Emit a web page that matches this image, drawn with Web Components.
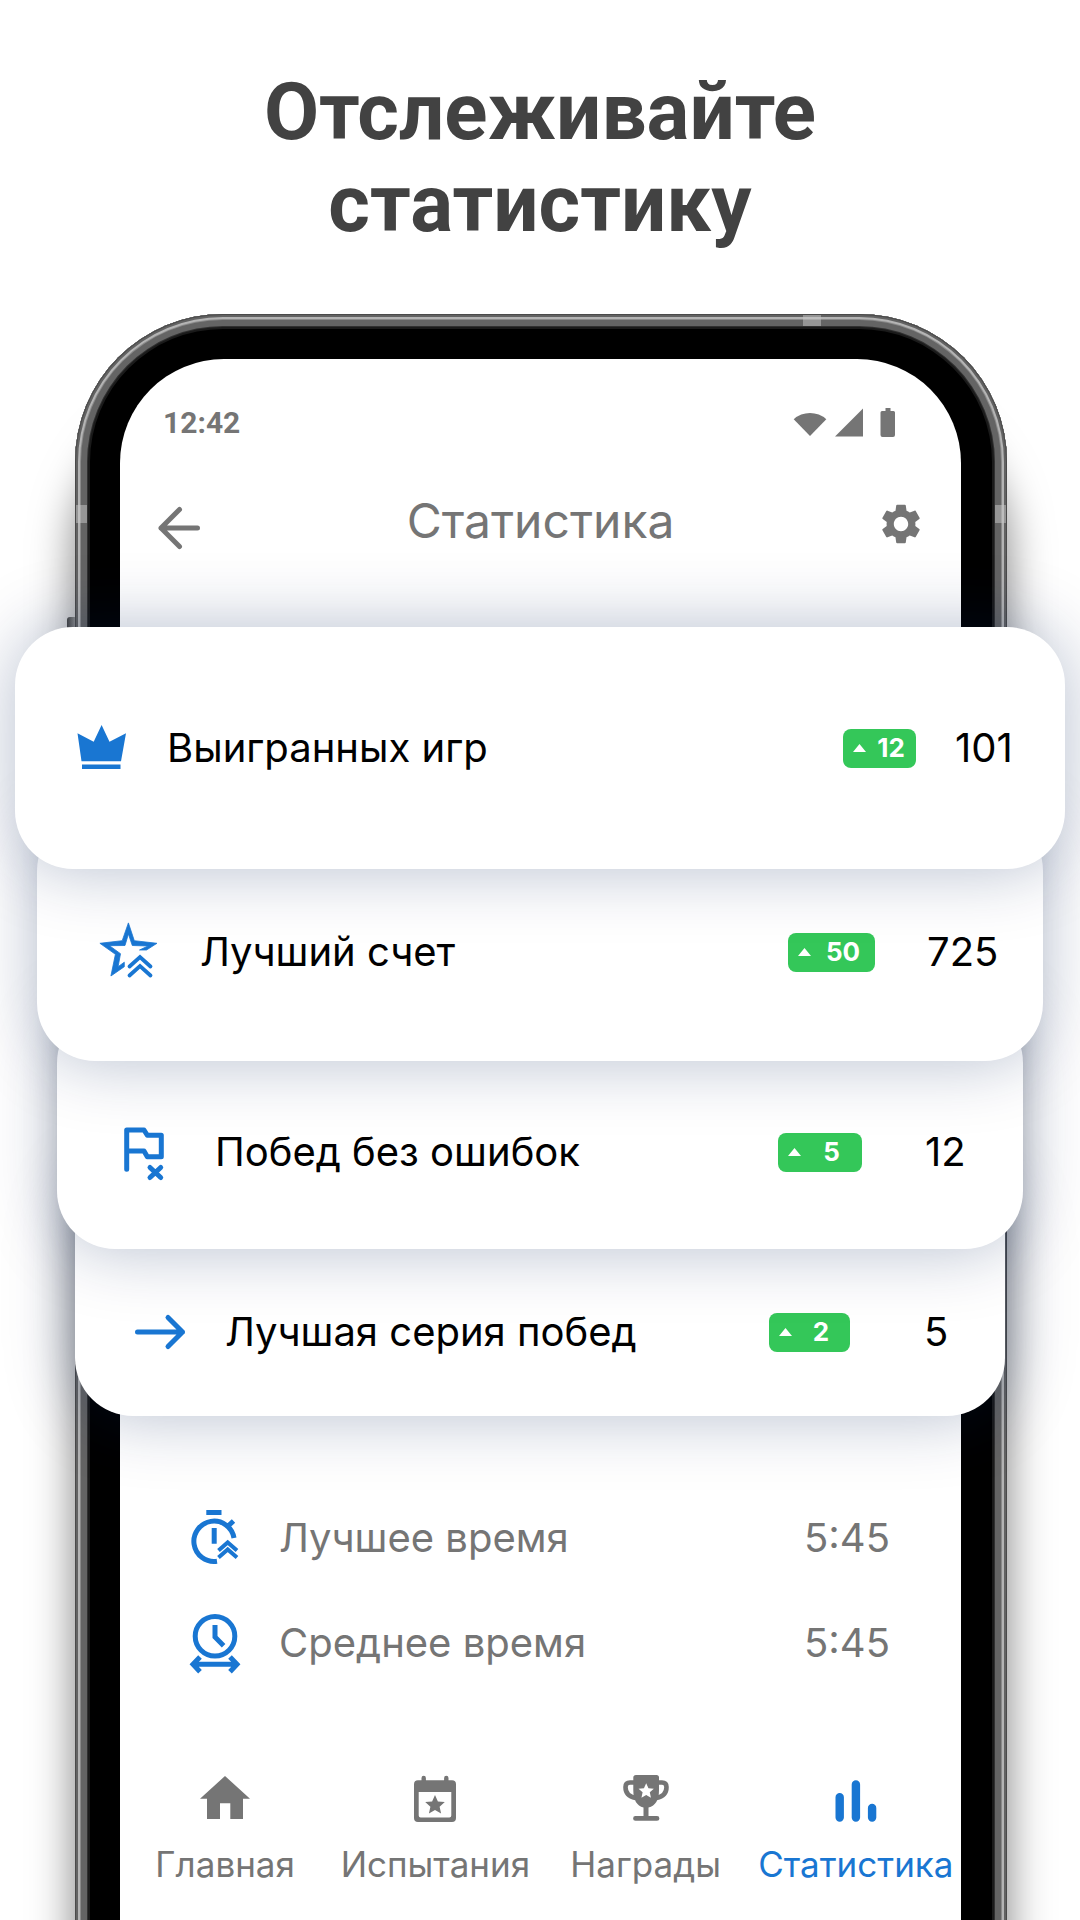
<!DOCTYPE html>
<html lang="ru">
<head>
<meta charset="utf-8">
<meta name="viewport" content="width=device-width, initial-scale=1">
<title>Статистика</title>
<style>
  body {
    margin: 0;
    background: #fff;
    font-family: Inter, "Liberation Sans", sans-serif;
  }
</style>
</head>
<body>
<promo-page>
  <span slot="title">Отслеживайте<br>статистику</span>
  <phone-frame>
    <status-bar time="12:42"></status-bar>
    <app-header>Статистика</app-header>
    <card-stack>
      <stat-card level="1" icon="crown" delta="12" value="101">Выигранных игр</stat-card>
      <stat-card level="2" icon="star" delta="50" value="725">Лучший счет</stat-card>
      <stat-card level="3" icon="flag" delta="5" value="12">Побед без ошибок</stat-card>
      <stat-card level="4" icon="streak" delta="2" value="5">Лучшая серия побед</stat-card>
    </card-stack>
    <time-list>
      <time-row icon="stopwatch" value="5:45">Лучшее время</time-row>
      <time-row icon="clock" value="5:45">Среднее время</time-row>
    </time-list>
    <tab-bar>
      <tab-item icon="home" href="#home">Главная</tab-item>
      <tab-item icon="calendar" href="#events">Испытания</tab-item>
      <tab-item icon="trophy" href="#awards">Награды</tab-item>
      <tab-item icon="bars" href="#stats" active>Статистика</tab-item>
    </tab-bar>
  </phone-frame>
</promo-page>

<script>
const STAR = 'M0-10L2.9-3.6 9.8-3 4.6 1.7 6.1 8.5 0 5-6.1 8.5-4.6 1.7-9.8-3-2.9-3.6z';

// name: [width, height, markup]
const ICONS = {
  wifi: [34, 30, '<path d="M.7 11.3A24 24 0 0 1 33.3 11.3L17 28z"/>'],
  signal: [28, 30, '<path d="M0 28.5L28 .5v28z"/>'],
  battery: [16, 30, '<path d="M5.500 0h5v3H13.500a1.500 1.500 0 0 1 1.500 1.500V27a2 2 0 0 1-2 2H2.500a2 2 0 0 1-2-2V4.500A1.500 1.500 0 0 1 2 3h3.500z"/>'],
  back: [42, 56, '<g fill="none" stroke="currentColor" stroke-width="5" stroke-linecap="round" stroke-linejoin="round"><path d="M21.500 16.500L3 35l18.500 18.500M3 35h36.500"/></g>'],
  gear: [40, 46, '<path transform="translate(-4 2) scale(2)" d="M19.140 12.940c.040-.3.060-.610.060-.940 0-.320-.020-.640-.070-.940l2.030-1.580c.180-.140.230-.410.120-.610l-1.920-3.320c-.120-.220-.370-.290-.590-.220l-2.390.960c-.5-.380-1.030-.7-1.620-.940l-.360-2.540c-.040-.240-.240-.410-.480-.410h-3.840c-.240 0-.430.170-.470.410l-.360 2.540c-.590.240-1.130.570-1.620.940l-2.390-.960c-.220-.080-.470 0-.590.220L2.740 8.870c-.120.210-.080.470.120.610l2.030 1.580c-.050.3-.090.630-.090.940s.020.640.070.940l-2.030 1.580c-.180.140-.230.410-.120.610l1.920 3.320c.120.220.370.290.590.220l2.390-.960c.5.380 1.030.7 1.620.940l.360 2.540c.050.240.240.410.480.410h3.840c.240 0 .440-.170.470-.410l.360-2.540c.590-.240 1.130-.560 1.620-.940l2.390.960c.220.080.470 0 .590-.220l1.920-3.320c.120-.220.070-.470-.120-.610l-2.010-1.580zM12 15.600c-1.980 0-3.600-1.620-3.600-3.600s1.620-3.600 3.600-3.600 3.600 1.620 3.600 3.600-1.620 3.600-3.600 3.600z"/>'],
  crown: [50, 46, '<path d="M.5 8.300l16.200 8.400L24.600 0l7.900 16.700L49 8.300l-5 28H4.500zM5 39.500h38.500V44H5z"/>'],
  star: [58, 60, '<path stroke="currentColor" stroke-width=".8" d="M40.500 28h7L58 21.300l-22.700-2.600L29.400.9l-6.200 17.800L.9 21.300l15.500 11L11.900 54l13.400-9.300v-4.500l-6.200 4.500 2.400-13-11-8L26 23.500l3.400-11.500L33.300 23.500l15.700.5z"/><path fill="none" stroke="currentColor" stroke-width="3.800" stroke-linecap="round" d="M30.500 44.500L41 35l10.500 9.500M30.500 53.500L41 44l10.500 9.500"/>'],
  flag: [40, 50, '<g fill="none" stroke="currentColor" stroke-width="5" stroke-linecap="round" stroke-linejoin="round"><path d="M2.700 42.300V3H20l3.300 5.300h14v21.400h-14L20 24H2.700M26 40.500l10.700 10M36.700 40.500L26 50.500"/></g>'],
  streak: [50, 34, '<path fill="none" stroke="currentColor" stroke-width="5" stroke-linecap="round" stroke-linejoin="round" d="M2.500 17H47.500M33 2.500L47.500 17 33 31.500"/>'],
  stopwatch: [50, 58, '<path d="M16.300 1h15.200v5H16.300zM21.700 19h5v15.700h-5z"/><g fill="none" stroke="currentColor"><path stroke-width="5" d="M27 52.300A20.200 20.200 0 1 1 44 29M38 17l5.500-5"/><path stroke-width="4" d="M28.500 41.500l9.200-8 9.300 8M28.500 48.500l9.200-8 9.300 8"/></g>'],
  clock: [50, 60, '<g fill="none" stroke="currentColor" stroke-width="5"><circle cx="25" cy="23.200" r="19.800"/><path d="M25 12v12l8.600 8.700M3.500 51.300h43M10 44l-7 7.300 7 7.400M40 44l7 7.300-7 7.400"/></g>'],
  home: [50, 48, '<path d="M25 1l25 22.700h-7V44H30.300V28.300H20V44H7V23.700H0z"/>'],
  calendar: [44, 48, `<path fill-rule="evenodd" d="M5 5.300h3.500V3a2.200 2.200 0 0 1 4.400 0v2.300h18.200V3a2.200 2.200 0 0 1 4.400 0v2.300H39a4 4 0 0 1 4 4V43a4 4 0 0 1-4 4H5a4 4 0 0 1-4-4V9.300a4 4 0 0 1 4-4zM5.700 17v23.500a2 2 0 0 0 2 2h28.600a2 2 0 0 0 2-2V17z"/><path transform="translate(22 30)" d="${STAR}"/>`],
  trophy: [48, 48, `<path d="M14 0h20.500Q37 0 37 2.500V15Q37 30 26.500 32.500V41H35a2.400 2.400 0 0 1 0 4.800H13.500a2.400 2.400 0 0 1 0-4.800h8V32.500Q11.300 30 11.300 15V2.500Q11.300 0 14 0z"/><path fill="none" stroke="currentColor" stroke-width="4.600" d="M12 7.500H8Q3.500 7.500 3.500 12q0 9 10 11M36 7.500h4q4.500 0 4.500 4.500 0 9-10 11"/><path fill="#fff" transform="translate(24.200 16) scale(.78)" d="${STAR}"/>`],
  bars: [42, 48, '<path fill="none" stroke="currentColor" stroke-width="8.400" stroke-linecap="round" d="M4.700 22.200v20.300M20.900 9.500v33M37.100 33v9.500"/>']
};

const icon = name => {
  const [width, height, body] = ICONS[name];
  return `<svg width="${width}" height="${height}" viewBox="0 0 ${width} ${height}" fill="currentColor" overflow="visible" aria-hidden="true">${body}</svg>`;
};

class BaseElement extends HTMLElement {

  constructor() {
    super();
    this.shadowDOM = this.attachShadow({mode: 'open'});
  }

  connectedCallback() {
    this.shadowDOM.innerHTML = this.template();
  }
}

class PromoPage extends BaseElement {

  template() {
    return `
      <style>
      :host {
        display: flex;
        flex-direction: column;
        min-height: 100vh;
        overflow: hidden;
      }

      h1 {
        margin: 0;
        padding: 66px 24px 64px;
        color: #424242;
        font: 700 80px/92px Roboto, sans-serif;
        text-align: center;
      }
      </style>
      <h1><slot name="title"></slot></h1>
      <slot></slot>
    `;
  }
}

class PhoneFrame extends BaseElement {

  template() {
    return `
      <style>
      /* the bottom edge of the frame runs off the page */
      :host {
        position: relative;
        display: flex;
        flex: 1;
        flex-direction: column;
        margin: 0 73px -20px 75px;
        padding: 45px 46px 20px 45px;
        border-radius: 148px 148px 0 0;
        background: #000;
        box-shadow:
          inset 0 0 0 1px #4a4a4a,
          inset 0 0 0 3px #626262,
          inset 0 0 0 5px #b4b4b4,
          inset 0 0 0 6px #8a8a8a,
          inset 0 0 0 12px #646464,
          inset 0 0 0 13px #303030,
          inset 0 0 0 15px #1a1a1a,
          0 90px 44px rgba(0, 0, 0, 0.5);
      }

      .screen {
        display: flex;
        flex: 1;
        flex-direction: column;
        border-radius: 104px 104px 0 0;
        background: #fff;
      }

      .band {
        position: absolute;
        background: rgba(200, 200, 200, 0.5);
      }

      .band.top {
        top: 1px;
        right: 186px;
        width: 18px;
        height: 11px;
      }

      .band.left, .band.right {
        top: 191px;
        width: 11px;
        height: 18px;
      }

      .band.left {
        left: 1px;
      }

      .band.right {
        right: 1px;
      }

      .key {
        position: absolute;
        top: 303px;
        left: -8px;
        width: 8px;
        height: 100px;
        border-radius: 3px 0 0 3px;
        background: linear-gradient(90deg, #444, #888);
      }
      </style>
      <i class="band top"></i>
      <i class="band left"></i>
      <i class="band right"></i>
      <i class="key"></i>
      <div class="screen"><slot></slot></div>
    `;
  }
}

class StatusBar extends BaseElement {

  template() {
    return `
      <style>
      :host {
        display: flex;
        align-items: center;
        justify-content: space-between;
        padding: 48px 65px 0 43px;
        color: #757575;
        font: 700 30px/32px Roboto, sans-serif;
      }

      .icons {
        display: flex;
        gap: 8px;
      }

      .icons svg:last-child {
        margin-left: 9px;
      }
      </style>
      <span>${this.getAttribute('time')}</span>
      <div class="icons">${icon('wifi')}${icon('signal')}${icon('battery')}</div>
    `;
  }
}

class AppHeader extends BaseElement {

  template() {
    return `
      <style>
      :host {
        display: flex;
        align-items: center;
        justify-content: space-between;
        margin-top: 52px;
        padding: 0 40px 0 38px;
        height: 60px;
        color: #757575;
      }

      h2 {
        margin: 0;
        font-weight: 400;
        font-size: 48px;
        line-height: 64px;
      }

      button {
        display: flex;
        padding: 0;
        border: 0;
        background: none;
        color: inherit;
      }
      </style>
      <button type="button" aria-label="Назад">${icon('back')}</button>
      <h2><slot></slot></h2>
      <button type="button" aria-label="Настройки">${icon('gear')}</button>
    `;
  }
}

class CardStack extends BaseElement {

  template() {
    return `
      <style>
      /* wider than the screen, the cards hang over both sides of the phone */
      :host {
        position: relative;
        z-index: 1;
        display: flex;
        flex-direction: column;
        margin: 76px -104px 0 -105px;
      }
      </style>
      <slot></slot>
    `;
  }
}

class StatCard extends BaseElement {

  template() {
    return `
      <style>
      :host {
        position: relative;
        display: flex;
        align-items: center;
        border-radius: 58px;
        background: #fff;
        box-shadow: 0 0 70px rgba(0, 32, 85, 0.29);
        color: #000;
        font-size: 40px;
        line-height: 60px;
      }

      :host([level="1"]) {
        z-index: 4;
        padding: 91px 0 91px 58px;
        --gap: 36px;
        --badge: 73px;
        --value-gap: 39px;
        --value: 110px;
      }

      :host([level="2"]) {
        z-index: 3;
        margin: -56px 22px 0;
        padding: 109px 0 79px 62px;
        --gap: 43px;
        --badge: 87px;
        --value-gap: 52px;
        --value: 116px;
      }

      :host([level="3"]) {
        z-index: 2;
        margin: -56px 42px 0;
        padding: 117px 0 67px 58px;
        --gap: 42px;
        --badge: 84px;
        --value-gap: 63px;
        --value: 98px;
      }

      :host([level="4"]) {
        z-index: 1;
        margin: -80px 60px 0;
        padding: 133px 0 54px 56px;
        --gap: 36px;
        --badge: 81px;
        --value-gap: 74px;
        --value: 81px;
      }

      .icon {
        display: flex;
        justify-content: center;
        width: 58px;
        margin-right: var(--gap);
        color: #1976d2;
      }

      .label {
        flex: 1;
        white-space: nowrap;
      }

      .badge {
        display: flex;
        align-items: center;
        box-sizing: border-box;
        width: var(--badge);
        height: 39px;
        padding-left: 10px;
        border-radius: 8px;
        background: #34c759;
        color: #fff;
        font-weight: 700;
        font-size: 26px;
      }

      .badge::before {
        content: "";
        width: 13px;
        height: 8px;
        background: currentColor;
        clip-path: polygon(50% 0, 100% 100%, 0 100%);
      }

      .badge span {
        flex: 1;
        text-align: center;
      }

      .value {
        width: var(--value);
        margin-left: var(--value-gap);
      }
      </style>
      <div class="icon">${icon(this.getAttribute('icon'))}</div>
      <div class="label"><slot></slot></div>
      <div class="badge"><span>${this.getAttribute('delta')}</span></div>
      <div class="value">${this.getAttribute('value')}</div>
    `;
  }
}

class TimeList extends BaseElement {

  template() {
    return `
      <style>
      :host {
        display: flex;
        flex-direction: column;
        gap: 45px;
        margin-top: 92px;
        padding: 0 71px 0 66px;
      }
      </style>
      <slot></slot>
    `;
  }
}

class TimeRow extends BaseElement {

  template() {
    return `
      <style>
      :host {
        display: flex;
        align-items: center;
        height: 60px;
        color: #757575;
        font-size: 40px;
        line-height: 60px;
      }

      .icon {
        display: flex;
        justify-content: center;
        width: 58px;
        margin-right: 35px;
        color: #1976d2;
      }

      .label {
        flex: 1;
      }
      </style>
      <div class="icon">${icon(this.getAttribute('icon'))}</div>
      <div class="label"><slot></slot></div>
      <div>${this.getAttribute('value')}</div>
    `;
  }
}

class TabBar extends BaseElement {

  template() {
    return `
      <style>
      :host {
        display: block;
        margin-top: auto;
        padding: 48px 0 35px;
      }

      nav {
        display: grid;
        grid-template-columns: repeat(4, 1fr);
      }
      </style>
      <nav><slot></slot></nav>
    `;
  }
}

class TabItem extends BaseElement {

  template() {
    return `
      <style>
      :host {
        display: block;
        min-width: 0;
        color: #757575;
      }

      :host([active]) {
        color: #1976d2;
      }

      a {
        display: flex;
        flex-direction: column;
        align-items: center;
        gap: 20px;
        color: inherit;
        font-size: 35px;
        line-height: 42px;
        text-decoration: none;
      }
      </style>
      <a href="${this.getAttribute('href')}">${icon(this.getAttribute('icon'))}<span><slot></slot></span></a>
    `;
  }
}

customElements.define('promo-page', PromoPage);
customElements.define('phone-frame', PhoneFrame);
customElements.define('status-bar', StatusBar);
customElements.define('app-header', AppHeader);
customElements.define('card-stack', CardStack);
customElements.define('stat-card', StatCard);
customElements.define('time-list', TimeList);
customElements.define('time-row', TimeRow);
customElements.define('tab-bar', TabBar);
customElements.define('tab-item', TabItem);
</script>
</body>
</html>
